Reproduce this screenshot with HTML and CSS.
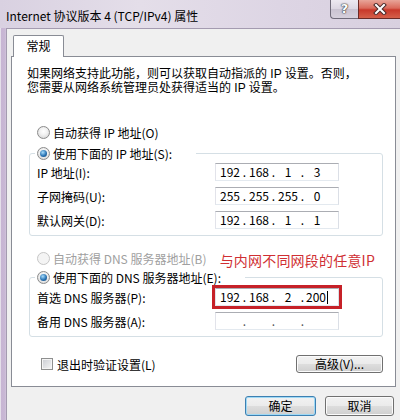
FILE: index.html
```html
<!DOCTYPE html>
<html lang="zh-CN">
<head>
<meta charset="utf-8">
<title>Internet 协议版本 4 (TCP/IPv4) 属性</title>
<link rel="stylesheet" href="styles.css">
</head>
<body>
<div class="window">
  <header class="titlebar">
    <span class="title">Internet 协议版本 4 (TCP/IPv4) 属性</span>
    <div class="controls">
      <span class="btn-help">?</span>
      <span class="btn-close">
        <svg width="14" height="12" viewBox="0 0 14 12">
          <path d="M3 2 L11 10 M11 2 L3 10" stroke="#4a2a2a" stroke-width="4" stroke-linecap="square" fill="none"/>
          <path d="M3 2 L11 10 M11 2 L3 10" stroke="#ffffff" stroke-width="2" stroke-linecap="square" fill="none"/>
        </svg>
      </span>
    </div>
  </header>
  <main class="client">
    <div class="tabs"><span class="tab">常规</span></div>
    <section class="panel">
      <p class="desc">如果网络支持此功能，则可以获取自动指派的 IP 设置。否则，<br>您需要从网络系统管理员处获得适当的 IP 设置。</p>
      <div class="option"><span class="radio"></span>自动获得 IP 地址(O)</div>
      <fieldset class="group group-ip">
        <legend class="option legend"><span class="radio checked"></span>使用下面的 IP 地址(S):</legend>
        <div class="field-row">
          <label>IP 地址(I):</label>
          <div class="ip"><span class="oct">192</span><span class="dot">.</span><span class="oct">168</span><span class="dot">.</span><span class="oct">1</span><span class="dot">.</span><span class="oct">3</span></div>
        </div>
        <div class="field-row">
          <label>子网掩码(U):</label>
          <div class="ip"><span class="oct">255</span><span class="dot">.</span><span class="oct">255</span><span class="dot">.</span><span class="oct">255</span><span class="dot">.</span><span class="oct">0</span></div>
        </div>
        <div class="field-row">
          <label>默认网关(D):</label>
          <div class="ip"><span class="oct">192</span><span class="dot">.</span><span class="oct">168</span><span class="dot">.</span><span class="oct">1</span><span class="dot">.</span><span class="oct">1</span></div>
        </div>
      </fieldset>
      <div class="option dns-auto"><span class="radio"></span><span class="disabled-text">自动获得 DNS 服务器地址(B)</span><span class="note">与内网不同网段的任意IP</span></div>
      <fieldset class="group group-dns">
        <legend class="option legend"><span class="radio checked"></span>使用下面的 DNS 服务器地址(E):</legend>
        <div class="field-row">
          <label>首选 DNS 服务器(P):</label>
          <div class="ip highlight"><span class="oct">192</span><span class="dot">.</span><span class="oct">168</span><span class="dot">.</span><span class="oct">2</span><span class="dot">.</span><span class="oct">200<span class="caret"></span></span></div>
        </div>
        <div class="field-row">
          <label>备用 DNS 服务器(A):</label>
          <div class="ip empty"><span class="oct"></span><span class="dot">.</span><span class="oct"></span><span class="dot">.</span><span class="oct"></span><span class="dot">.</span><span class="oct"></span></div>
        </div>
      </fieldset>
      <div class="panel-footer">
        <label class="check"><span class="checkbox"></span>退出时验证设置(L)</label>
        <button class="btn btn-advanced">高级(V)...</button>
      </div>
    </section>
    <div class="actions">
      <button class="btn btn-ok">确定</button>
      <button class="btn btn-cancel">取消</button>
    </div>
  </main>
</div>
</body>
</html>
```
FILE: styles.css
```css
* { box-sizing: border-box; }
html, body { margin: 0; padding: 0; }
body {
  width: 400px;
  height: 420px;
  overflow: hidden;
  font-family: "Noto Sans CJK SC", "Noto Sans", sans-serif;
  font-size: 12px;
  color: #000;
  background: linear-gradient(to right, #e4dfe9 0, #e4dfe9 1px, #c7b5d3 1px, #c9b8d5 5px, #d4c8dc 6px);
}
.window {
  display: flex;
  flex-direction: column;
  height: 420px;
}
.titlebar {
  height: 28px;
  flex: none;
  display: flex;
  align-items: flex-start;
  background: linear-gradient(to right, #d9d1e1 0, #e4dee9 35%, #ddd5e4 70%, #d8d0df 100%);
}
.title {
  margin-left: 6px;
  line-height: 31px;
  font-size: 12px;
  white-space: nowrap;
}
.controls {
  margin-left: auto;
  margin-right: -1px;
  display: flex;
}
.btn-help {
  width: 28px;
  height: 19px;
  border: 1px solid #6f6a79;
  border-top: none;
  border-right: none;
  border-radius: 0 0 0 4px;
  background: linear-gradient(#ede9f1 0, #dcd6e2 50%, #c9c2d1 50%, #d6d0dc 100%);
  color: #fff;
  font-family: "DejaVu Sans", sans-serif;
  font-weight: bold;
  font-size: 13px;
  line-height: 18px;
  text-align: center;
  text-shadow: 0 0 1px #333, 0 0 1px #333, 0 0 2px #555;
}
.btn-close {
  width: 43px;
  height: 19px;
  border: 1px solid #6b2a26;
  border-top: none;
  border-right: none;
  background: linear-gradient(#e8a599 0, #da6a5b 45%, #c8382a 55%, #d5604a 100%);
  display: flex;
  align-items: center;
  justify-content: center;
}
.client {
  flex: 1;
  margin-left: 6px;
  border-top: 1px solid #a49bb0;
  border-left: 1px solid #a49bb0;
  background: #f0f0f0;
  padding: 6px 4px 0 4px;
  display: flex;
  flex-direction: column;
}
.tabs {
  display: flex;
  padding-left: 2px;
}
.tab {
  position: relative;
  z-index: 1;
  width: 51px;
  height: 22px;
  margin-bottom: -1px;
  border: 1px solid #898c95;
  border-bottom: none;
  border-radius: 2px 2px 0 0;
  background: #fff;
  text-align: center;
  line-height: 20px;
}
.panel {
  border: 1px solid #898c95;
  background: #fff;
  padding: 0 12px 13px 15px;
}
.desc {
  margin: 10px 0 0 0;
  font-family: "Liberation Sans", "Noto Sans CJK SC", sans-serif;
  line-height: 14px;
  white-space: nowrap;
}
.option {
  display: flex;
  align-items: center;
  height: 16px;
  margin: 29px 0 0 10px;
  white-space: nowrap;
}
.radio {
  flex: none;
  width: 13px;
  height: 13px;
  margin-right: 3px;
  border: 1px solid #8b8b8b;
  border-radius: 50%;
  background: radial-gradient(circle at 50% 40%, #ffffff 0, #f2f2f2 40%, #cfcfcf 100%);
  display: flex;
  align-items: center;
  justify-content: center;
}
.radio.checked::after {
  content: "";
  width: 7px;
  height: 7px;
  border-radius: 50%;
  background: radial-gradient(circle at 40% 35%, #a6dcfc 0, #2a74b4 55%, #0d3d6e 100%);
}
.group {
  margin: 5px 0 0 2px;
  padding: 2px 43px 6px 7px;
  border: 1px solid #d5dfe5;
  border-radius: 3px;
  min-width: 0;
}
.group-dns {
  margin-top: 3px;
  padding-top: 3px;
}
.legend {
  margin: 0 0 0 -2px;
  padding: 0 24px 0 2px;
  height: 16px;
}
.field-row {
  display: grid;
  grid-template-columns: 1fr 124px;
  align-items: center;
  height: 18px;
}
.field-row + .field-row { margin-top: 6px; }
.field-row label { white-space: nowrap; }
.ip {
  display: flex;
  align-items: center;
  height: 18px;
  padding-left: 2px;
  border: 1px solid;
  border-color: #abadb3 #dbdfe6 #e3e9ef #e2e3ea;
  background: #fff;
  line-height: 16px;
}
.ip .oct {
  width: 24px;
  text-align: center;
  white-space: nowrap;
}
.ip .dot {
  width: 5px;
  text-align: center;
}
.ip.empty .dot { color: #555; }
.ip.highlight {
  outline: 3px solid #c62128;
  outline-offset: 0;
}
.caret {
  display: inline-block;
  width: 1px;
  height: 13px;
  margin-left: 1px;
  vertical-align: -2px;
  background: #000;
}
.dns-auto {
  margin-top: 14px;
}
.dns-auto .radio {
  border-color: #c6c6c6;
  background: #f4f4f4;
}
.disabled-text { color: #a0a0a0; }
.note {
  margin-left: auto;
  margin-right: 8px;
  color: #d02f33;
  font-size: 14px;
  letter-spacing: 0.2px;
  line-height: 16px;
  padding-top: 4px;
}
.panel-footer {
  display: flex;
  align-items: center;
  justify-content: space-between;
  height: 18px;
  margin-top: 18px;
}
.check {
  display: flex;
  align-items: center;
  margin-left: 14px;
}
.checkbox {
  width: 12px;
  height: 12px;
  margin-right: 4px;
  border: 1px solid #8e8f8f;
  background: linear-gradient(135deg, #c9ccd2 0, #f6f6f6 100%);
  box-shadow: inset 0 0 0 1px #f4f4f4;
}
.btn {
  font: inherit;
  color: #000;
  padding: 0;
  border: 1px solid #707070;
  border-radius: 3px;
  background: linear-gradient(#f2f2f2 0, #ebebeb 48%, #dddddd 52%, #cfcfcf 100%);
  box-shadow: inset 0 0 0 1px #fbfbfb;
  line-height: 16px;
}
.btn-advanced {
  width: 87px;
  height: 18px;
}
.actions {
  display: flex;
  justify-content: flex-end;
  gap: 9px;
  margin-top: 9px;
  padding-right: 2px;
}
.btn-ok, .btn-cancel { height: 20px; }
.btn-ok {
  width: 71px;
  border-color: #3c7fb1;
  box-shadow: inset 0 0 0 1px #9fd9f5;
}
.btn-cancel { width: 69px; }
```
